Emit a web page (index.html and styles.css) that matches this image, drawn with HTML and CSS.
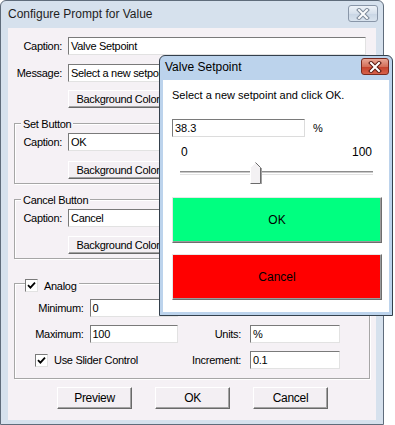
FILE: index.html
```html
<html>
  <head>
    <meta charset="utf-8" />
    <link rel="stylesheet" href="styles.css">
  </head>
  <body>
    <div class="stage">
      <!-- main dialog -->
      <div class="win">
        <div class="win__title">
          <span class="win__caption">Configure Prompt for Value</span>
          <span class="closeBtn closeBtn--inactive">
            <svg width="16" height="12" viewBox="0 0 16 12"><path d="M4 2 L12 10 M12 2 L4 10" stroke="#7d8a9a" stroke-width="4" stroke-linecap="square"/><path d="M4 2 L12 10 M12 2 L4 10" stroke="#fbfcfd" stroke-width="2" stroke-linecap="square"/></svg>
          </span>
        </div>
        <div class="win__client">
          <div class="row row--first">
            <span class="row__label">Caption:</span>
            <span class="field field--wide">Valve Setpoint</span>
          </div>
          <div class="row row--next">
            <span class="row__label">Message:</span>
            <span class="field field--wide">Select a new setpoint and click OK.</span>
          </div>
          <div class="row row--btn">
            <span class="btn btn--color">Background Color</span>
          </div>

          <div class="group">
            <div class="group__legend">Set Button</div>
            <div class="row row--groupFirst">
              <span class="row__label row__label--group">Caption:</span>
              <span class="field field--group">OK</span>
            </div>
            <div class="row row--groupBtn">
              <span class="btn btn--color">Background Color</span>
            </div>
          </div>

          <div class="group">
            <div class="group__legend">Cancel Button</div>
            <div class="row row--groupFirst">
              <span class="row__label row__label--group">Caption:</span>
              <span class="field field--group">Cancel</span>
            </div>
            <div class="row row--groupBtn row--groupBtnTight">
              <span class="btn btn--color">Background Color</span>
            </div>
          </div>

          <div class="group group--analog">
            <div class="group__legend group__legend--check">
              <span class="check"><svg width="9" height="9" viewBox="0 0 9 9"><path d="M1 4.2 L3.4 6.6 L8 1.6" fill="none" stroke="#000" stroke-width="1.8"/></svg></span>
              <span>Analog</span>
            </div>
            <div class="analog__row analog__row--min">
              <div class="analog__left">
                <span class="analog__label">Minimum:</span>
                <span class="field field--num">0</span>
              </div>
            </div>
            <div class="analog__row">
              <div class="analog__left">
                <span class="analog__label">Maximum:</span>
                <span class="field field--num">100</span>
              </div>
              <span class="analog__label analog__label--right">Units:</span>
              <span class="field field--num field--right">%</span>
            </div>
            <div class="analog__row">
              <div class="analog__left analog__left--check">
                <span class="check"><svg width="9" height="9" viewBox="0 0 9 9"><path d="M1 4.2 L3.4 6.6 L8 1.6" fill="none" stroke="#000" stroke-width="1.8"/></svg></span>
                <span>Use Slider Control</span>
              </div>
              <span class="analog__label analog__label--right">Increment:</span>
              <span class="field field--num field--right">0.1</span>
            </div>
          </div>

          <div class="actions">
            <span class="btn btn--action">Preview</span>
            <span class="btn btn--action">OK</span>
            <span class="btn btn--action">Cancel</span>
          </div>
        </div>
      </div>

      <!-- preview popup, floats over the dialog -->
      <div class="popup">
        <div class="popup__title">
          <span class="popup__caption">Valve Setpoint</span>
          <span class="closeBtn closeBtn--active">
            <svg width="16" height="12" viewBox="0 0 16 12"><path d="M4 2 L12 10 M12 2 L4 10" stroke="#5a1a12" stroke-width="4" stroke-linecap="square"/><path d="M4 2 L12 10 M12 2 L4 10" stroke="#fff" stroke-width="2" stroke-linecap="square"/></svg>
          </span>
        </div>
        <div class="popup__client">
          <div class="popup__msg">Select a new setpoint and click OK.</div>
          <div class="popup__valueRow">
            <span class="field field--value">38.3</span>
            <span class="popup__unit">%</span>
          </div>
          <div class="popup__scale">
            <span>0</span>
            <span>100</span>
          </div>
          <div class="slider">
            <div class="slider__track"></div>
            <svg class="slider__thumb" style="left: calc((100% - 11px) * 0.383)" width="12" height="22" viewBox="0 0 12 22">
              <path d="M0.5 21.5 V5.5 L5.5 0.5 L10.5 5.5 V21.5 Z" fill="#f3f1f3" stroke="#fff"/>
              <path d="M5.5 0.5 L10.5 5.5 V21.5 H0.5" fill="none" stroke="#6b6b6b"/>
              <path d="M11.5 6 V22" stroke="#a0a0a0"/>
            </svg>
          </div>
          <div class="bigBtn bigBtn--ok">OK</div>
          <div class="bigBtn bigBtn--cancel">Cancel</div>
        </div>
      </div>
    </div>
  </body>
</html>
```

FILE: styles.css
```css
body {
  margin: 0;
  background: #fff;
  font-family: "Liberation Sans", Arial, sans-serif;
  font-size: 11px;
  color: #000;
}

.stage {
  position: relative;
  width: 395px;
  height: 425px;
  overflow: hidden;
}

/* ---- main dialog ---- */

.win {
  box-sizing: border-box;
  width: 384px;
  height: 425px;
  border: 1px solid #5f6c7b;
  border-radius: 6px 6px 0 0;
  background: #d6e1ed;
  padding: 0 7px 4px;
  display: flex;
  flex-direction: column;
}

.win__title {
  height: 27px;
  display: flex;
  align-items: flex-start;
  justify-content: space-between;
  flex: none;
}

.win__caption {
  font-size: 12px;
  line-height: 27px;
  color: #1e1e1e;
}

.closeBtn {
  box-sizing: border-box;
  display: flex;
  align-items: center;
  justify-content: center;
  border-radius: 3px;
}

.closeBtn--inactive {
  width: 30px;
  height: 17px;
  margin: 4px -2px 0 0;
  border: 1px solid #8996a8;
  background: linear-gradient(#eef3f8, #d6e0ec 50%, #c8d5e4 51%, #d9e3ee);
}

.win__client {
  flex: 1;
  background: #f5f1f5;
  display: flex;
  flex-direction: column;
  letter-spacing: -0.3px;
}

.row {
  display: flex;
  align-items: center;
  height: 18px;
  flex: none;
}

.row--first { margin-top: 9px; }
.row--next { margin-top: 9px; }
.row--btn { margin-top: 8px; padding-left: 60px; }

.row__label {
  width: 54px;
  margin-right: 6px;
  text-align: right;
}

.row__label--group {
  width: 47px;
}

.field {
  box-sizing: border-box;
  height: 18px;
  background: #fff;
  border: 1px solid;
  border-color: #7a7a7a #e2e2e2 #e2e2e2 #7a7a7a;
  padding: 0 2px;
  line-height: 16px;
  white-space: nowrap;
  overflow: hidden;
}

.field--wide { width: 298px; }
.field--group { width: 290px; }
.field--num { width: 89px; }
.field--right { width: 90px; }

.btn {
  box-sizing: border-box;
  display: inline-flex;
  align-items: center;
  justify-content: center;
  background: #f3eff3;
  border: 1px solid;
  border-color: #fff #696969 #696969 #fff;
  box-shadow: inset -1px -1px 0 #a3a3a3;
  white-space: nowrap;
}

.btn--color {
  width: 100px;
  height: 18px;
}

/* ---- group boxes ---- */

.group {
  margin: 15px 6px 0 6px;
  border: 1px solid #a6a6a6;
  box-shadow: inset 1px 1px 0 #fff, 1px 1px 0 #fff;
  padding-bottom: 4px;
  flex: none;
}

.group__legend {
  display: inline-flex;
  align-items: center;
  height: 13px;
  margin: -7px 0 0 6px;
  padding: 0 2px;
  background: #f5f1f5;
  vertical-align: top;
}

.group__legend--check {
  margin: -5px 0 0 10px;
  padding: 0 3px 0 0;
  gap: 6px;
}

.row--groupFirst { margin-top: 3px; }
.row--groupBtn { margin-top: 10px; padding-left: 53px; }
.row--groupBtnTight { margin-top: 9px; }

.group--analog {
  margin-top: 24px;
  padding-bottom: 9px;
}

.check {
  box-sizing: border-box;
  width: 13px;
  height: 13px;
  display: inline-flex;
  align-items: center;
  justify-content: center;
  background: #fff;
  border: 1px solid;
  border-color: #7a7a7a #e2e2e2 #e2e2e2 #7a7a7a;
}

.analog__row {
  display: flex;
  align-items: center;
  height: 18px;
  margin-top: 8px;
}

.analog__row--min { margin-top: 7px; }

.analog__left {
  width: 163px;
  display: flex;
  align-items: center;
}

.analog__left--check {
  padding-left: 20px;
  box-sizing: border-box;
  gap: 6px;
}

.analog__label {
  width: 69px;
  margin-right: 6px;
  text-align: right;
}

.analog__label--right {
  width: 63px;
  margin-right: 9px;
}

.actions {
  display: flex;
  gap: 23px;
  margin: 8px 0 0 49px;
}

.btn--action {
  width: 75px;
  height: 22px;
  font-size: 12px;
}

/* ---- popup ---- */

.popup {
  position: absolute;
  left: 159px;
  top: 55px;
  box-sizing: border-box;
  width: 234px;
  height: 261px;
  border: 1px solid #34404c;
  border-radius: 6px 6px 0 0;
  background: #bcd3ec;
  padding: 0 3px 3px;
  display: flex;
  flex-direction: column;
}

.popup__title {
  height: 24px;
  display: flex;
  align-items: flex-start;
  justify-content: space-between;
  flex: none;
}

.popup__caption {
  font-size: 12px;
  line-height: 22px;
  padding-left: 2px;
}

.closeBtn--active {
  width: 28px;
  height: 17px;
  margin-top: 2px;
  border: 1px solid #7a2a1e;
  background: linear-gradient(#e8a796, #d4705a 50%, #c2402a 51%, #d7614a);
}

.popup__client {
  flex: 1;
  background: #fff;
  padding-left: 9px;
  display: flex;
  flex-direction: column;
}

.popup__msg {
  margin-top: 9px;
  line-height: 13px;
}

.popup__valueRow {
  display: flex;
  align-items: center;
  margin-top: 17px;
}

.field--value {
  width: 133px;
  border-color: #7a7a7a #dcdcdc #dcdcdc #7a7a7a;
}

.popup__unit {
  margin-left: 8px;
}

.popup__scale {
  display: flex;
  justify-content: space-between;
  line-height: 13px;
  margin: 9px 17px 0 9px;
  font-size: 12px;
}

.slider {
  position: relative;
  width: 193px;
  height: 22px;
  margin: 3px 0 0 8px;
}

.slider__track {
  margin-top: 9px;
  height: 1px;
  border-top: 1px solid #8d8d8d;
  border-bottom: 1px solid #fff;
  background: #c9c9c9;
  box-shadow: 0 1px 0 #e3e3e3;
}

.slider__thumb {
  position: absolute;
  top: 0;
}

.bigBtn {
  box-sizing: border-box;
  width: 210px;
  height: 46px;
  display: flex;
  align-items: center;
  justify-content: center;
  font-size: 12px;
  border: 1px solid;
  border-color: #e6e6e6 #6e6e6e #6e6e6e #e6e6e6;
  box-shadow: inset -1px -1px 0 #9b9b9b;
}

.bigBtn--ok {
  margin-top: 13px;
  background: #00ff80;
}

.bigBtn--cancel {
  margin-top: 11px;
  background: #ff0000;
}
```
